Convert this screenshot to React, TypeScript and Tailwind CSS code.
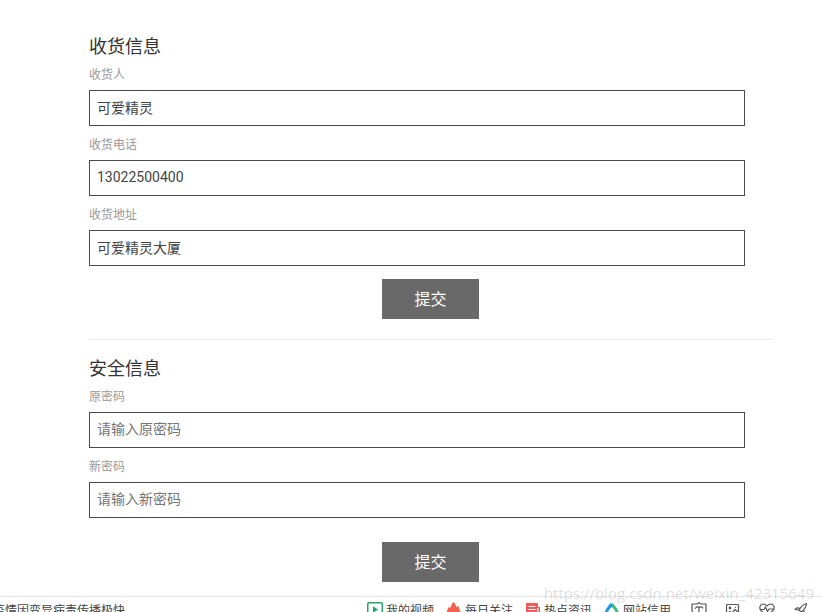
import type { ReactNode } from 'react';

type FieldProps = {
  id: string;
  label: string;
  type?: string;
  value?: string;
  placeholder?: string;
};

function Field({ id, label, type = 'text', value, placeholder }: FieldProps) {
  return (
    <div className="flex flex-col gap-1.5">
      <label htmlFor={id} className="text-xs leading-[18px] text-[#999]">
        {label}
      </label>
      <input
        id={id}
        type={type}
        defaultValue={value}
        placeholder={placeholder}
        className="mr-[27px] h-9 border border-[#4a4a4a] bg-white px-[7px] pb-0.5 text-sm text-[#444] placeholder:text-[#757575]"
      />
    </div>
  );
}

function Section({ title, children }: { title: string; children: ReactNode }) {
  return (
    <form className="flex flex-col" onSubmit={(e) => e.preventDefault()}>
      <h2 className="mb-[5px] text-lg leading-7 text-[#333]">{title}</h2>
      <div className="flex flex-col gap-2.5">{children}</div>
    </form>
  );
}

function Submit() {
  return (
    <button type="submit" className="h-10 w-[97px] self-center bg-[#696969] pt-0.5 text-base text-white">
      提交
    </button>
  );
}

function VideoIcon() {
  return (
    <svg viewBox="0 0 16 16" className="size-4" fill="none" aria-hidden="true">
      <rect x="0.75" y="0.75" width="14.5" height="13.5" rx="1" stroke="#25a567" strokeWidth="1.5" />
      <path d="M6 4.300v6.400L11 7.500z" fill="#25a567" />
    </svg>
  );
}

function FlameIcon() {
  return (
    <svg viewBox="0 0 16 16" className="size-4" fill="#f4604f" aria-hidden="true">
      <path d="M7.500 0C9 1.200 10 3 10.200 5.500L12 3.500c1 1.500 1.300 3 1.500 4.500.8.8 1.500 2 1.500 3.500 0 2.500-2 3.500-4 3.500H5c-2.500 0-4.500-1.500-4.500-4C.5 9 1.800 8 2.500 5l1.500 1C5 4.500 5.500 1.500 7.500 0z" />
    </svg>
  );
}

function NewsIcon() {
  return (
    <svg viewBox="0 0 16 16" className="size-4" fill="none" aria-hidden="true">
      <path d="M1 1h12v4h2v10H3a2 2 0 0 1-2-2z" fill="#ee5d5d" />
      <path d="M3.500 4.500h7M3.500 7.500h7M3.500 10.500h4M12.800 6v7" stroke="#fff" strokeWidth="1.200" />
    </svg>
  );
}

function CreditIcon() {
  return (
    <svg viewBox="0 0 16 16" className="size-4" fill="none" strokeWidth="3" strokeLinejoin="round" aria-hidden="true">
      <path d="M7.500 2C6 5 2 8 2 11.500c0 2 2 3 6 3" stroke="#2196e8" />
      <path d="M7.500 2c2 3 6 6 6 9.500 0 2-2 3-5.500 3" stroke="#42b883" />
      <path d="M7.500 2 5.500 5.500" stroke="#2196e8" />
    </svg>
  );
}

const toolIcons: { name: string; shape: ReactNode }[] = [
  {
    name: '安全防护',
    shape: (
      <>
        <path d="M8 .7 10 2h5v6c0 3-3 5.700-7 7-4-1.300-7-4-7-7V2h5z" />
        <path d="M4 6.800c1-2 3-2.500 4-1 1-1.500 3-1 4 .5M5 5.200c1-.8 2.300-.5 3 .6.700-1.100 2-1.400 3-.6M8 5.800v6" />
      </>
    ),
  },
  {
    name: '截图',
    shape: (
      <>
        <path d="M13.500 8V3.500a1 1 0 0 0-1-1h-10a1 1 0 0 0-1 1v10h12z" />
        <circle cx="5" cy="6" r="0.8" />
        <path d="m2 12 3-2.500 2 1.500 3-3.500 3.500 3M10 5.500h1" />
      </>
    ),
  },
  {
    name: '健康',
    shape: (
      <>
        <path d="M8 14 2 8.500C-.5 5.500 1.500 2 4.200 2c1.800 0 3 1 3.800 2 .8-1 2-2 3.800-2 2.700 0 4.700 3.500 2.200 6.500z" />
        <path d="M1.500 7.500H5L6.500 5l2 4.500L10 7h4.500" />
      </>
    ),
  },
  {
    name: '加速',
    shape: (
      <>
        <path d="M13.500 1.500c-3 .8-5.500 3-7.500 6.500l2.500 2c3-2.500 4.500-5 5-8.500z" />
        <path d="M7 6.500C5 5.500 3 5.800 2 7.500L6 8M10.500 8c1 1.500.5 3.500-1.500 4.500L8.500 10M5.500 10 3 13" />
      </>
    ),
  },
];

const links = [
  { text: '我的视频', icon: <VideoIcon /> },
  { text: '每日关注', icon: <FlameIcon /> },
  { text: '热点资讯', icon: <NewsIcon /> },
  { text: '网站信用', icon: <CreditIcon /> },
];

function StatusBar() {
  return (
    <footer className="relative flex h-7 shrink-0 items-start justify-between border-t border-[#e4e4e4] bg-white pt-[5px] pr-3.5 text-xs leading-[18px] text-[#444]">
      <a href="#news" className="-ml-[7px] whitespace-nowrap">
        疫情因变异病毒传播极快
      </a>
      <nav className="flex items-start">
        <div className="flex gap-3">
          {links.map((link) => (
            <a key={link.text} href="#link" className="flex items-start gap-[3px] whitespace-nowrap">
              {link.icon}
              {link.text}
            </a>
          ))}
        </div>
        <div className="ml-5 flex gap-[18px]">
          {toolIcons.map((tool) => (
            <button key={tool.name} type="button" aria-label={tool.name}>
              <svg
                viewBox="0 0 16 16"
                className="size-4"
                fill="none"
                stroke="#555"
                strokeWidth="1.200"
                strokeLinejoin="round"
                aria-hidden="true"
              >
                {tool.shape}
              </svg>
            </button>
          ))}
        </div>
      </nav>
      <span className="pointer-events-none absolute -top-3.5 right-[9px] font-['Open_Sans',sans-serif] text-[15px] leading-5 text-black/15">
        https://blog.csdn.net/weixin_42315649
      </span>
    </footer>
  );
}

export default function App() {
  return (
    <div className="flex h-screen flex-col overflow-hidden bg-white font-[Roboto,'Noto_Sans_CJK_SC',sans-serif]">
      <main className="flex shrink-0 flex-col pt-[33px] pr-[51px] pb-3.5 pl-[89px]">
        <Section title="收货信息">
          <Field id="receiver" label="收货人" value="可爱精灵" />
          <Field id="phone" label="收货电话" value="13022500400" />
          <Field id="address" label="收货地址" value="可爱精灵大厦" />
          <div className="mt-[3px] flex flex-col">
            <Submit />
          </div>
        </Section>
        <hr className="mt-5 mb-[15px] border-[#e8e8e8]" />
        <Section title="安全信息">
          <Field id="old-password" label="原密码" type="password" placeholder="请输入原密码" />
          <Field id="new-password" label="新密码" type="password" placeholder="请输入新密码" />
          <div className="mt-3.5 flex flex-col">
            <Submit />
          </div>
        </Section>
      </main>
      <StatusBar />
    </div>
  );
}
